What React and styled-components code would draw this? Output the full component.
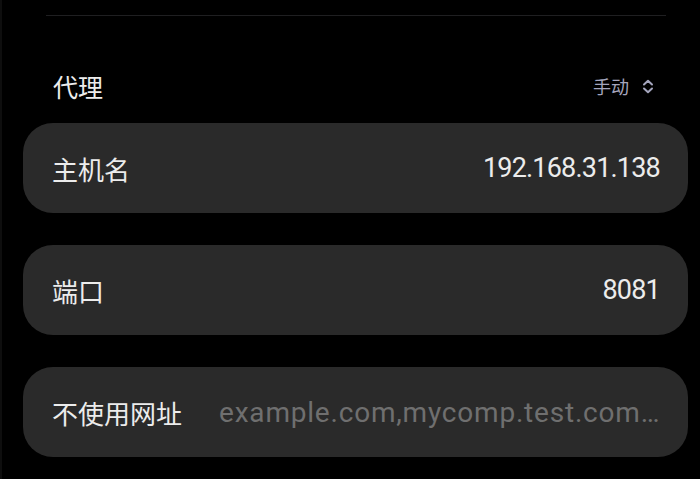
import React from 'react';
import styled, { createGlobalStyle } from 'styled-components';

const Global = createGlobalStyle`
  html, body {
    margin: 0;
    padding: 0;
    background: #000;
  }
  body {
    font-family: Roboto, "Noto Sans CJK SC", sans-serif;
    -webkit-font-smoothing: antialiased;
  }
`;

const Page = styled.div`
  width: 700px;
  height: 479px;
  overflow: hidden;
  background: #000;
  padding-top: 15px;
  box-sizing: border-box;
  border-left: 2px solid #0e0e0e;
`;

const Divider = styled.div`
  height: 1px;
  background: #1f1f21;
  margin: 0 34px 0 44px;
`;

const Header = styled.div`
  display: flex;
  align-items: center;
  justify-content: space-between;
  height: 50px;
  margin: 45px 0 12px;
  padding: 0 45px 0 51px;
`;

const Title = styled.div`
  color: #ececec;
  font-size: 25px;
`;

const Mode = styled.div`
  display: flex;
  align-items: center;
  gap: 12px;
  color: #a4a5bd;
  font-size: 18px;
`;

const List = styled.div`
  display: flex;
  flex-direction: column;
  gap: 32px;
  padding: 0 12px 0 21px;
`;

const Card = styled.div`
  display: flex;
  align-items: center;
  justify-content: space-between;
  gap: 37px;
  height: 90px;
  border-radius: 30px;
  background: #2a2a2a;
  padding: 0 26px 0 29px;
  white-space: nowrap;
`;

const Label = styled.div`
  color: #ececec;
  font-size: 26px;
  flex-shrink: 0;
`;

const Value = styled.div`
  color: #ececec;
  font-size: 27px;
  letter-spacing: -0.8px;
  margin-right: 2px;
  min-width: 0;
`;

const Placeholder = styled.div`
  flex: 1;
  color: #6f6f6f;
  font-size: 28px;
  letter-spacing: 0.8px;
  min-width: 0;
`;

const Chevrons = () => (
  <svg width="14" height="15" viewBox="0 0 14 15" fill="none" stroke="#a4a5bd" strokeWidth="2" strokeLinecap="round" strokeLinejoin="round">
    <path d="M3 5.5 L7 1.8 L11 5.5" />
    <path d="M3 9.5 L7 13.2 L11 9.5" />
  </svg>
);

const rows = [
  { label: '主机名', value: '192.168.31.138' },
  { label: '端口', value: '8081' },
  { label: '不使用网址', placeholder: 'example.com,mycomp.test.com…' },
];

export default function App() {
  return (
    <Page>
      <Global />
      <Divider />
      <Header>
        <Title>代理</Title>
        <Mode>
          手动
          <Chevrons />
        </Mode>
      </Header>
      <List>
        {rows.map(r => (
          <Card key={r.label}>
            <Label>{r.label}</Label>
            {r.placeholder ? (
              <Placeholder>{r.placeholder}</Placeholder>
            ) : (
              <Value>{r.value}</Value>
            )}
          </Card>
        ))}
      </List>
    </Page>
  );
}
